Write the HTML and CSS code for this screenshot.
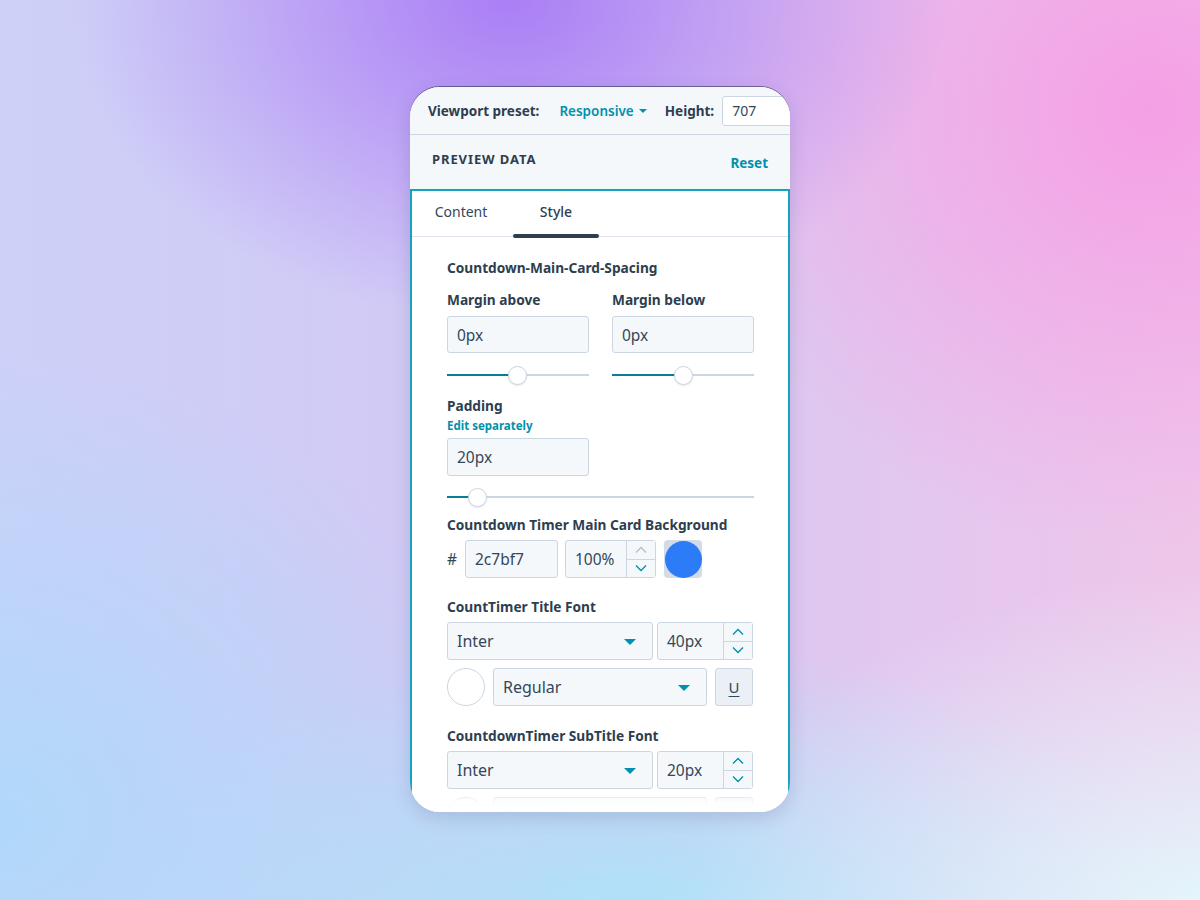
FILE: index.html
```html
<!DOCTYPE html>
<html>
<head>
<meta charset="utf-8">
<link rel="stylesheet" href="styles.css">
</head>
<body>
<div class="stage">
  <div class="phone">
    <div class="topbar">
      <span class="tb-label">Viewport preset:</span>
      <span class="tb-preset">Responsive <span class="caret"></span></span>
      <span class="tb-label tb-height">Height:</span>
      <div class="tb-input">707</div>
    </div>
    <div class="preview-head">
      <span class="ph-title">PREVIEW DATA</span>
      <span class="ph-reset">Reset</span>
    </div>
    <div class="panel">
      <div class="tabs">
        <div class="tab tab-content">Content</div>
        <div class="tab tab-style active">Style</div>
      </div>
      <div class="body">
        <div class="section-title">Countdown-Main-Card-Spacing</div>
        <div class="two-col">
          <div class="col">
            <div class="label">Margin above</div>
            <div class="input">0px</div>
            <div class="slider"><div class="fill" style="width:70px"></div><div class="thumb" style="left:70px"></div></div>
          </div>
          <div class="col">
            <div class="label">Margin below</div>
            <div class="input">0px</div>
            <div class="slider"><div class="fill" style="width:71px"></div><div class="thumb" style="left:71px"></div></div>
          </div>
        </div>
        <div class="label label-padding">Padding</div>
        <div class="link">Edit separately</div>
        <div class="input input-pad">20px</div>
        <div class="slider slider-wide"><div class="fill" style="width:30px"></div><div class="thumb" style="left:30px"></div></div>

        <div class="label label-bg">Countdown Timer Main Card Background</div>
        <div class="color-row">
          <span class="hash">#</span>
          <div class="input input-hex">2c7bf7</div>
          <div class="stepper-input stepper-pct">
            <div class="si-value">100%</div>
            <div class="si-steps">
              <div class="step step-up disabled"><svg viewBox="0 0 12 8" width="12" height="8"><path d="M1 6.5 L6 1.5 L11 6.5" fill="none" stroke="currentColor" stroke-width="1.4"/></svg></div>
              <div class="step step-down"><svg viewBox="0 0 12 8" width="12" height="8"><path d="M1 1.5 L6 6.5 L11 1.5" fill="none" stroke="currentColor" stroke-width="1.4"/></svg></div>
            </div>
          </div>
          <div class="swatch"><div class="swatch-dot"></div></div>
        </div>

        <div class="label label-font">CountTimer Title Font</div>
        <div class="font-row">
          <div class="select select-font">Inter<span class="tri"></span></div>
          <div class="stepper-input stepper-size">
            <div class="si-value">40px</div>
            <div class="si-steps">
              <div class="step step-up"><svg viewBox="0 0 12 8" width="12" height="8"><path d="M1 6.5 L6 1.5 L11 6.5" fill="none" stroke="currentColor" stroke-width="1.4"/></svg></div>
              <div class="step step-down"><svg viewBox="0 0 12 8" width="12" height="8"><path d="M1 1.5 L6 6.5 L11 1.5" fill="none" stroke="currentColor" stroke-width="1.4"/></svg></div>
            </div>
          </div>
        </div>
        <div class="style-row">
          <div class="color-circle"></div>
          <div class="select select-weight">Regular<span class="tri"></span></div>
          <div class="u-btn"><span>U</span></div>
        </div>

        <div class="label label-font2">CountdownTimer SubTitle Font</div>
        <div class="font-row">
          <div class="select select-font">Inter<span class="tri"></span></div>
          <div class="stepper-input stepper-size">
            <div class="si-value">20px</div>
            <div class="si-steps">
              <div class="step step-up"><svg viewBox="0 0 12 8" width="12" height="8"><path d="M1 6.5 L6 1.5 L11 6.5" fill="none" stroke="currentColor" stroke-width="1.4"/></svg></div>
              <div class="step step-down"><svg viewBox="0 0 12 8" width="12" height="8"><path d="M1 1.5 L6 6.5 L11 1.5" fill="none" stroke="currentColor" stroke-width="1.4"/></svg></div>
            </div>
          </div>
        </div>
        <div class="style-row">
          <div class="color-circle"></div>
          <div class="select select-weight">Regular<span class="tri"></span></div>
          <div class="u-btn"><span>U</span></div>
        </div>
      </div>
    </div>
    <div class="fade"></div>
  </div>
</div>
</body>
</html>
```

FILE: styles.css
```css
* { box-sizing: border-box; }
html, body { margin: 0; padding: 0; }
body {
  width: 1200px;
  height: 900px;
  overflow: hidden;
  font-family: "Noto Sans", "Liberation Sans", sans-serif;
  color: #33475b;
  background:
    radial-gradient(ellipse 440px 320px at 510px 0px, rgba(168,122,245,0.95), rgba(168,122,245,0) 100%),
    radial-gradient(ellipse 460px 440px at 1150px 110px, rgba(245,158,229,0.95), rgba(245,158,229,0) 100%),
    radial-gradient(ellipse 560px 360px at 1230px 930px, rgba(226,250,253,1), rgba(226,250,253,0) 100%),
    radial-gradient(ellipse 560px 300px at 640px 940px, rgba(170,229,249,1), rgba(170,229,249,0) 100%),
    radial-gradient(ellipse 520px 460px at 0px 820px, rgba(176,216,250,1), rgba(176,216,250,0) 100%),
    linear-gradient(90deg, #cdd0f8 0%, #d3c8f4 45%, #efc6ea 100%);
}
.stage {
  display: flex;
  justify-content: center;
  padding-top: 87px;
}
.phone {
  position: relative;
  width: 380px;
  height: 725px;
  border-radius: 30px;
  overflow: hidden;
  background: #fff;
  display: flex;
  flex-direction: column;
  box-shadow: 0 -1px 0 rgba(40,40,70,0.55), 0 6px 18px rgba(60,70,110,0.18);
}
.topbar {
  flex: none;
  height: 48px;
  background: #f5f8fa;
  border-bottom: 1px solid #cbd6e2;
  display: flex;
  align-items: center;
  padding-left: 18px;
  font-size: 13.5px;
  white-space: nowrap;
}
.tb-label { font-weight: 700; color: #2d3e50; }
.tb-preset {
  color: #0091ae;
  font-weight: 600;
  margin-left: 20px;
  display: flex;
  align-items: center;
}
.caret {
  display: inline-block;
  width: 0; height: 0;
  border-left: 4px solid transparent;
  border-right: 4px solid transparent;
  border-top: 4px solid #0091ae;
  margin-left: 5px;
}
.tb-height { margin-left: 18px; }
.tb-input {
  margin-left: 8px;
  height: 30px;
  width: 80px;
  flex: none;
  border: 1px solid #cbd6e2;
  border-radius: 3px;
  background: #fff;
  font-size: 14px;
  display: flex;
  align-items: center;
  padding-left: 9px;
}
.preview-head {
  flex: none;
  height: 54px;
  background: #f5f8fa;
  display: flex;
  justify-content: space-between;
  align-items: flex-start;
  padding: 15px 22px 0 22px;
}
.ph-title { font-size: 13px; font-weight: 700; letter-spacing: 0.9px; color: #2d3e50; }
.ph-reset { font-size: 13.5px; font-weight: 700; color: #0091ae; margin-top: 4px; }
.panel {
  flex: 1;
  border: 2px solid #16a3bd;
  border-bottom: none;
  overflow: hidden;
}
.tabs {
  height: 46px;
  border-bottom: 1px solid #dfe3eb;
  display: flex;
  font-size: 14px;
}
.tab {
  display: flex;
  justify-content: center;
  padding-top: 11px;
  position: relative;
}
.tab-content { width: 98px; color: #33475b; }
.tab-style { width: 86px; margin-left: 3px; font-weight: 500; color: #2d3e50; }
.tab.active::after {
  content: "";
  position: absolute;
  left: 0; right: 0; bottom: -2px;
  height: 4px;
  border-radius: 2px;
  background: #2d3e50;
}
.body {
  padding: 22px 34px 0 35px;
}
.section-title, .label {
  font-size: 13.7px;
  font-weight: 700;
  line-height: 18px;
  white-space: nowrap;
  color: #2d3e50;
}
.two-col {
  display: flex;
  gap: 23px;
  margin-top: 14px;
}
.col { width: 142px; }
.input {
  margin-top: 7px;
  height: 37px;
  border: 1px solid #cbd6e2;
  border-radius: 3px;
  background: #f5f8fa;
  font-size: 15.5px;
  display: flex;
  align-items: center;
  padding-left: 9px;
  color: #33475b;
}
.slider {
  position: relative;
  height: 20px;
  margin-top: 12px;
}
.slider::before {
  content: "";
  position: absolute;
  left: 0; right: 0; top: 9px;
  height: 2px;
  background: #cbd6e2;
}
.slider .fill {
  position: absolute;
  left: 0; top: 9px;
  height: 2px;
  background: #0a7d96;
}
.slider .thumb {
  position: absolute;
  top: 1px;
  width: 19px; height: 19px;
  margin-left: -9px;
  border-radius: 50%;
  background: #fff;
  border: 1px solid #cbd6e2;
  box-shadow: 0 1px 2px rgba(45,62,80,0.12);
}
.label-padding { margin-top: 12px; }
.link {
  margin-top: 3px;
  font-size: 11.5px;
  font-weight: 700;
  line-height: 16px;
  color: #0091ae;
}
.input-pad { margin-top: 4px; width: 142px; height: 38px; }
.slider-wide { margin-top: 11px; }
.label-bg { margin-top: 9px; }
.color-row {
  margin-top: 6px;
  display: flex;
  align-items: center;
  height: 38px;
}
.hash { font-size: 15.5px; width: 18px; }
.input-hex { margin-top: 0; width: 93px; height: 38px; }
.stepper-input {
  display: flex;
  height: 38px;
  border: 1px solid #cbd6e2;
  border-radius: 3px;
  background: #f5f8fa;
  font-size: 15.5px;
}
.si-value {
  flex: 1;
  display: flex;
  align-items: center;
  padding-left: 9px;
}
.si-steps {
  width: 29px;
  border-left: 1px solid #cbd6e2;
  display: flex;
  flex-direction: column;
}
.step {
  flex: 1;
  display: flex;
  align-items: center;
  justify-content: center;
  color: #0091ae;
  background: #f5f8fa;
}
.step-up { border-bottom: 1px solid #cbd6e2; }
.step.disabled { color: #b0c1d4; }
.stepper-pct { margin-left: 7px; width: 91px; }
.swatch {
  margin-left: 8px;
  width: 38px; height: 38px;
  border-radius: 4px;
  background: #d3dce6;
  display: flex;
  align-items: center;
  justify-content: center;
}
.swatch-dot {
  width: 37px; height: 37px;
  border-radius: 50%;
  background: #2c7bf7;
}
.label-font { margin-top: 20px; }
.label-font2 { margin-top: 21px; }
.font-row {
  margin-top: 6px;
  display: flex;
  gap: 4px;
}
.select {
  position: relative;
  height: 38px;
  border: 1px solid #cbd6e2;
  border-radius: 3px;
  background: #f5f8fa;
  font-size: 16px;
  display: flex;
  align-items: center;
  padding-left: 9px;
}
.tri {
  position: absolute;
  right: 16px;
  top: 16px;
  width: 0; height: 0;
  border-left: 6px solid transparent;
  border-right: 6px solid transparent;
  border-top: 6px solid #0091ae;
}
.select-font { width: 206px; }
.stepper-size { width: 96px; }
.style-row {
  margin-top: 8px;
  display: flex;
  gap: 8px;
}
.color-circle {
  width: 38px; height: 38px;
  border-radius: 50%;
  border: 1px solid #cbd6e2;
  background: #fff;
}
.select-weight { width: 214px; }
.u-btn {
  width: 38px; height: 38px;
  border: 1px solid #cbd6e2;
  border-radius: 3px;
  background: #eaf0f6;
  display: flex;
  align-items: center;
  justify-content: center;
  font-size: 15px;
}
.u-btn span { text-decoration: underline; text-underline-offset: 3px; }
.fade {
  position: absolute;
  left: 0; right: 0; bottom: 0;
  height: 22px;
  background: linear-gradient(180deg, rgba(255,255,255,0) 0%, rgba(255,255,255,0.92) 60%, #fff 100%);
}
```
